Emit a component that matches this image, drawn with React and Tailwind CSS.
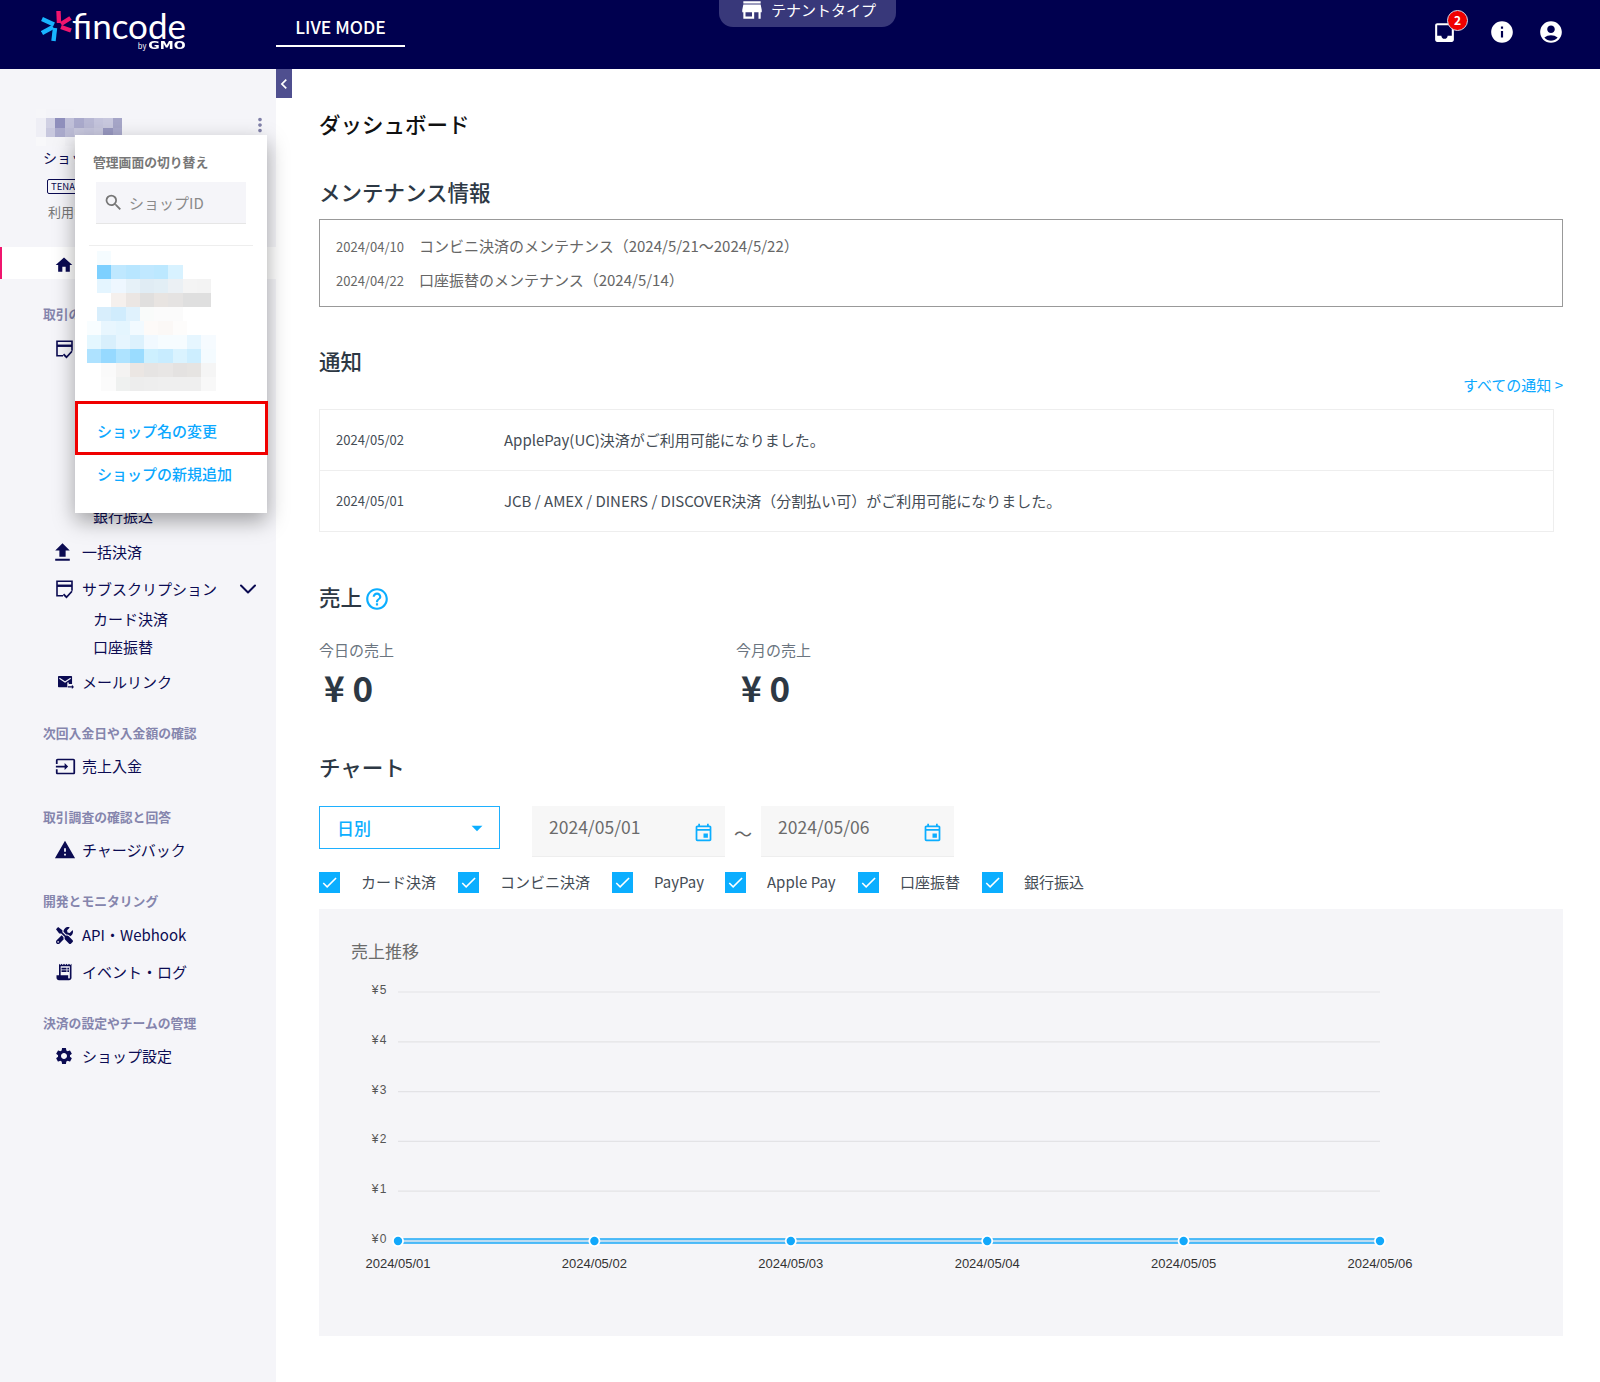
import {
  MdInbox, MdInfo, MdAccountCircle, MdStore, MdHome, MdSearch, MdFileUpload,
  MdInput, MdWarning, MdReceiptLong, MdSettings, MdChevronLeft,
  MdMoreVert, MdHelpOutline, MdOutlineEvent, MdArrowDropDown, MdCheck,
} from 'react-icons/md'
import { FaTools } from 'react-icons/fa'
import { ChevronDown } from 'lucide-react'

// mosaic blur over the shop names, row by row
const nameMosaic = [
  ['#f6f6f9', '#f4f4f8', '#f4f4f8', '#f4f4f8', '#f5f5f9', '#f5f5f9', '#f5f5f9', '#f5f5f9', '#f5f5f9'],
  ['#eeeef5', '#d0d0e3', '#8f8fbc', '#c0c0d9', '#aaaacc', '#b8b8d4', '#c4c4dc', '#c8c8de', '#a6a6c8'],
  ['#eeeef5', '#c8c8de', '#aaaacc', '#bcbcd6', '#c6c6dc', '#c4c4dc', '#c8c8de', '#9898c0', '#aaaacc'],
  ['#f8f8fa', '#f5f5f8', '#f5f5f8', '#f2f2f6', '#f6f6f8', '#f8f8fa', '#f8f8fa', '#f8f8fa', '#f8f8fa'],
]
const W = '#ffffff'
const shopMosaicTop = [
  ['#f5fcff', W, W, W, W, W, W, W],
  ['#7dd0ff', '#bfe8ff', '#b8e6ff', '#c0e8ff', '#bce8ff', '#d8f2ff', W, W],
  ['#e4f5ff', '#eef7ff', '#e6f1f8', '#e0ecf4', '#e2eef5', '#ebf0f4', '#f4f4f4', '#f3f3f3'],
  [W, '#f5f0ed', '#ebe6e3', '#e0dfde', '#e8e4e1', '#e5e3e2', '#dfdfdf', '#dfdfdf'],
  ['#d8eefc', '#d0ecfd', '#e0f2fd', '#f9fbfa', '#fbfbfb', '#fbfbfb', W, W],
]
const shopMosaicBottom = [
  ['#f8fdff', '#e8f6fe', '#e4f5fe', '#f2faff', '#fdfaf8', '#fbf8f6', '#fdfcfb', W, W],
  ['#e4f7ff', '#d8effc', '#e6f5fe', '#dcf1fd', '#f1f9ff', '#f6fcff', '#f6fcff', '#e6f6ff', '#f6fbff'],
  ['#aee2ff', '#96d9ff', '#aee3ff', '#9adcff', '#cdf0ff', '#c8ecff', '#daf3ff', '#cdeeff', '#f4fbff'],
  [W, '#fafafa', '#f4f3f2', '#ebe6e3', '#e6e4e3', '#e8e6e5', '#e4e2e1', '#e6e4e2', '#f5f5f5'],
  [W, '#fbfbfb', '#eff1f0', '#ededed', '#eeeeee', '#efefef', '#efefef', '#efefef', '#f8f8f8'],
]

function Mosaic({ rows, width, height }) {
  return (
    <div className="flex flex-col">
      {rows.map((row, i) => (
        <div key={i} className="flex">
          {row.map((c, j) => (
            <div key={j} style={{ width, height, backgroundColor: c }} />
          ))}
        </div>
      ))}
    </div>
  )
}

function CardCheckIcon({ className }) {
  return (
    <svg viewBox="1 1 17 18.5" className={className} fill="none" stroke="currentColor">
      <path d="M8 16.5H2V2h15v9.5" strokeWidth="1.6" />
      <path d="M2 6.5h15" strokeWidth="2.4" />
      <path d="M8.5 15l3 3 5.5-6" strokeWidth="1.8" />
    </svg>
  )
}

function MailLinkIcon({ className }) {
  return (
    <svg viewBox="0 0 18 16" className={className} fill="currentColor">
      <path d="M1.8 1h13.4c.4 0 .8.3.8.8v7.7h-3.5V8h-1.6v5H1.8c-.5 0-.8-.4-.8-.8V1.8c0-.5.3-.8.8-.8z" />
      <path d="M2.5 3.5L8.5 7.5l6-4" fill="none" stroke="#f5f5f9" strokeWidth="1.2" />
      <path d="M11.5 12h4.3v-1.6l2.2 2.3-2.2 2.3V13.4h-4.3z" />
    </svg>
  )
}

function Logo() {
  return (
    <div className="flex items-start w-[170px]">
      <svg viewBox="0 0 32 32" className="w-[32px] h-[32px] mt-[10px] shrink-0" strokeWidth="4.4" strokeLinecap="butt">
        <path d="M17.5 1 L18 13" stroke="#f0156e" />
        <path d="M29.5 8 L20 14" stroke="#f0156e" />
        <path d="M30 20.5 L20 17" stroke="#f0156e" />
        <path d="M12.5 31 L14 18" stroke="#18b4ff" />
        <path d="M1 23 L12 17" stroke="#18b4ff" />
        <path d="M1 9 L13 14.5" stroke="#18b4ff" />
      </svg>
      <div className="flex flex-col items-end ml-[1px] w-[112px] shrink-0">
        <span className="text-[35px] leading-[34px] mt-[8px] text-white font-['Lato',sans-serif]">fincode</span>
        <span className="flex items-baseline gap-[13px] text-[7.5px] leading-[8px] text-white">
          by
          <span className="inline-block origin-right scale-x-[1.4] text-[10px] font-bold font-['DejaVu_Sans',sans-serif]">GMO</span>
        </span>
      </div>
    </div>
  )
}

function Header() {
  return (
    <header className="relative h-[69px] bg-[#00004f] flex items-start text-white">
      <div className="w-[276px] pl-[41px]">
        <Logo />
      </div>
      <div className="w-[129px] h-[47px] border-b-[2.5px] border-white flex items-end justify-center pb-[5px]">
        <span className="text-[17.5px] leading-[26px] font-medium">LIVE MODE</span>
      </div>
      <div className="absolute left-[719px] top-0 w-[177px] h-[27px] rounded-b-[14px] bg-[#38387a] flex items-center justify-center gap-[6px] pb-[7px]">
        <MdStore className="text-[26px]" />
        <span className="text-[15px] leading-[20px]">テナントタイプ</span>
      </div>
      <div className="ml-auto flex items-center mt-[19px] pr-[36px]">
        <div className="relative mr-[32px]">
          <MdInbox className="text-[25px]" />
          <span className="absolute -top-[10px] -right-[11px] w-[21px] h-[21px] rounded-full bg-[#f00000] border border-[#d8d8e8] flex items-center justify-center text-[12px] font-bold leading-none">2</span>
        </div>
        <MdInfo className="text-[26px] mr-[23px]" />
        <MdAccountCircle className="text-[26px]" />
      </div>
    </header>
  )
}

function SectionLabel({ children, className }) {
  return <p className={`pl-[43px] text-[12.8px] leading-[18px] font-bold text-[#8585ad] ${className}`}>{children}</p>
}

function NavItem({ icon, label, className, right }) {
  return (
    <div className={`flex items-center pl-[54px] h-[24px] text-[#0b0b52] ${className}`}>
      <span className="w-[28px] shrink-0 flex">{icon}</span>
      <span className="text-[15px] leading-[24px]">{label}</span>
      {right}
    </div>
  )
}

function Sidebar() {
  return (
    <aside className="relative w-[276px] shrink-0 bg-[#f5f5f9]">
      <div className="pt-[40px] flex justify-between pl-[36px] pr-[5px] h-[79px]">
        <div className="blur-[0.6px] h-fit">
          <Mosaic rows={nameMosaic} width={9.6} height={9.3} />
        </div>
        <MdMoreVert className="text-[22px] text-[#8080a8] mt-[5px]" />
      </div>
      <p className="pl-[43px] mt-[-1px] text-[14px] leading-[20px] text-[#0b0b52]">ショップ</p>
      <div className="pl-[47px] mt-[12px] flex">
        <span className="border border-[#0b0b52] rounded-[2px] px-[3px] h-[15px] text-[9.5px] leading-[13px] text-[#0b0b52]">TENANT</span>
      </div>
      <p className="pl-[48px] mt-[8px] text-[13px] leading-[20px] text-[#777777]">利用中</p>

      <div className="mt-[25px] h-[32px] bg-white border-l-[2px] border-[#f0156e] flex items-center pl-[52px] pt-[3px] text-[#0b0b52]">
        <MdHome className="text-[20px]" />
      </div>

      <SectionLabel className="mt-[26px]">取引の確認</SectionLabel>
      <NavItem icon={<CardCheckIcon className="w-[17px] h-[19px] ml-[2px]" />} className="mt-[14px]" />
      <p className="pl-[93px] mt-[143px] text-[15px] leading-[24px] text-[#0b0b52]">銀行振込</p>
      <NavItem icon={<MdFileUpload className="text-[25px] -ml-[4px]" />} label="一括決済" className="mt-[12px]" />
      <NavItem
        icon={<CardCheckIcon className="w-[17px] h-[19px] ml-[2px]" />}
        label="サブスクリプション"
        className="mt-[13px]"
        right={<ChevronDown size={28} strokeWidth={1.7} className="ml-[17px] shrink-0" />}
      />
      <p className="pl-[93px] mt-[6px] text-[15px] leading-[24px] text-[#0b0b52]">カード決済</p>
      <p className="pl-[93px] mt-[4px] text-[15px] leading-[24px] text-[#0b0b52]">口座振替</p>
      <NavItem icon={<MailLinkIcon className="w-[17px] h-[15px] ml-[3px]" />} label="メールリンク" className="mt-[11px]" />

      <SectionLabel className="mt-[30px]">次回入金日や入金額の確認</SectionLabel>
      <NavItem icon={<MdInput className="text-[21px] ml-[1px]" />} label="売上入金" className="mt-[12px]" />
      <SectionLabel className="mt-[30px]">取引調査の確認と回答</SectionLabel>
      <NavItem icon={<MdWarning className="text-[22px]" />} label="チャージバック" className="mt-[12px]" />
      <SectionLabel className="mt-[30px]">開発とモニタリング</SectionLabel>
      <NavItem icon={<FaTools className="text-[17px] ml-[2px]" />} label="API・Webhook" className="mt-[13px]" />
      <NavItem icon={<MdReceiptLong className="text-[20px]" />} label="イベント・ログ" className="mt-[13px]" />
      <SectionLabel className="mt-[30px]">決済の設定やチームの管理</SectionLabel>
      <NavItem icon={<MdSettings className="text-[20px]" />} label="ショップ設定" className="mt-[12px]" />

      {/* ショップ切り替えメニュー */}
      <div className="absolute left-[75px] top-[66px] w-[192px] h-[378px] bg-white shadow-[0_8px_20px_rgba(0,0,0,0.35)] flex flex-col">
        <p className="pl-[18px] mt-[18px] text-[12.8px] leading-[18px] font-bold text-[#777777]">管理画面の切り替え</p>
        <div className="ml-[21px] mr-[21px] mt-[11px] h-[42px] bg-[#f5f5f9] border-b border-[#e6e6e6] flex items-center pl-[7px] text-[#777777]">
          <MdSearch className="text-[21px]" />
          <span className="ml-[5px] text-[15px] leading-[22px] text-[#8a8a8a]">ショップID</span>
        </div>
        <div className="mx-[14px] mt-[21px] border-t border-[#eeeeee]" />
        <div className="ml-[12px] mt-[5px] h-[140px] blur-[0.6px]">
          <div className="ml-[10px]">
            <Mosaic rows={shopMosaicTop} width={14.3} height={14} />
          </div>
          <Mosaic rows={shopMosaicBottom} width={14.3} height={14} />
        </div>
        <div className="mt-[10px] -mr-[1px] h-[54px] border-[3px] border-[#f00000] flex items-center pl-[19px] pt-[6px] text-[15px] font-medium text-[#0ba8ff]">ショップ名の変更</div>
        <div className="pl-[22px] mt-[7px] text-[15px] leading-[24px] font-medium text-[#0ba8ff]">ショップの新規追加</div>
      </div>
    </aside>
  )
}

function Heading({ children, className }) {
  return <h2 className={`text-[21.5px] leading-[30px] font-medium text-[#2d3844] ${className}`}>{children}</h2>
}

function Checkbox({ label, className }) {
  return (
    <div className={`flex items-center ${className}`}>
      <span className="w-[21px] h-[21px] bg-[#0baeff] flex items-center justify-center text-white">
        <MdCheck className="text-[19px]" />
      </span>
      <span className="ml-[21px] -mt-[2px] text-[15px] leading-[22px] text-[#444c55]">{label}</span>
    </div>
  )
}

function DateField({ value }) {
  return (
    <div className="w-[193px] h-[51px] bg-[#f7f7f7] border-b border-[#eeeeee] flex pl-[17px] pr-[11px]">
      <span className="text-[17.5px] leading-[42px] text-[#6b6b6b]">{value}</span>
      <MdOutlineEvent className="ml-auto mt-[16px] text-[21px] text-[#0baeff]" />
    </div>
  )
}

function Chart() {
  const xs = [398, 594.4, 790.8, 987.2, 1183.6, 1380]
  const ys = [1241, 1191.2, 1141.4, 1091.6, 1041.8, 992]
  const dates = ['2024/05/01', '2024/05/02', '2024/05/03', '2024/05/04', '2024/05/05', '2024/05/06']
  return (
    <svg viewBox="319 970 1244 310" className="w-[1244px] h-[310px] font-['Liberation_Sans',sans-serif]">
      {ys.map((y, i) => (
        <g key={y}>
          <line x1="398" x2="1380" y1={y} y2={y} stroke="#e3e3e6" strokeWidth="1.2" />
          <text x="388" y={y + 2} textAnchor="end" fontSize="12" fill="#555555" letterSpacing="1.5">¥{i}</text>
        </g>
      ))}
      <rect x="398" y="1238.5" width="982" height="5" fill="#bcdcf2" />
      <line x1="398" x2="1380" y1="1239" y2="1239" stroke="#25aef8" strokeWidth="1.5" />
      <line x1="398" x2="1380" y1="1243" y2="1243" stroke="#25aef8" strokeWidth="1.5" />
      {xs.map((x, i) => (
        <g key={x}>
          <circle cx={x} cy="1241" r="6" fill="#ffffff" />
          <circle cx={x} cy="1241" r="4.2" fill="#12a8fb" />
          <text x={x} y="1268" textAnchor="middle" fontSize="13" fill="#333333">{dates[i]}</text>
        </g>
      ))}
    </svg>
  )
}

function Main() {
  return (
    <main className="flex-1 min-w-0 pl-[43px] pr-[37px] relative">
      <button className="absolute left-0 top-0 w-[16px] h-[29px] bg-[#4f4f8f] flex items-center justify-center text-white">
        <MdChevronLeft className="text-[20px] shrink-0" />
      </button>

      <h1 className="mt-[40px] text-[21.5px] leading-[30px] font-medium text-[#111111]">ダッシュボード</h1>

      <Heading className="mt-[38px]">メンテナンス情報</Heading>
      <div className="mt-[12px] h-[88px] border border-[#999999] pl-[16px] pt-[1px] flex flex-col justify-center gap-[9px]">
        <div className="flex items-center h-[25px] text-[#666666]">
          <span className="w-[83px] text-[13px]">2024/04/10</span>
          <span className="text-[15px]">コンビニ決済のメンテナンス（2024/5/21〜2024/5/22）</span>
        </div>
        <div className="flex items-center h-[25px] text-[#666666]">
          <span className="w-[83px] text-[13px]">2024/04/22</span>
          <span className="text-[15px]">口座振替のメンテナンス（2024/5/14）</span>
        </div>
      </div>

      <Heading className="mt-[39px]">通知</Heading>
      <div className="flex justify-end mt-[-2px]">
        <span className="text-[15px] leading-[22px] text-[#0ba8ff]">すべての通知 &gt;</span>
      </div>
      <div className="mt-[13px] mr-[9px] border border-[#eeeeee] text-[15px] text-[#444c55]">
        <div className="flex items-center h-[61px] border-b border-[#eeeeee] pl-[16px]">
          <span className="w-[168px] text-[13px]">2024/05/02</span>
          <span>ApplePay(UC)決済がご利用可能になりました。</span>
        </div>
        <div className="flex items-center h-[60px] pl-[16px]">
          <span className="w-[168px] text-[13px]">2024/05/01</span>
          <span>JCB / AMEX / DINERS / DISCOVER決済（分割払い可）がご利用可能になりました。</span>
        </div>
      </div>

      <div className="mt-[50px] flex items-center gap-[2px]">
        <Heading>売上</Heading>
        <MdHelpOutline className="text-[26px] text-[#0baeff] mt-[3px]" />
      </div>
      <div className="mt-[27px] flex">
        <div className="w-[417px]">
          <p className="text-[15px] leading-[22px] text-[#6b7580]">今日の売上</p>
          <p className="mt-[4px] ml-[5px] text-[35px] leading-[44px] font-bold text-[#2d3844]">¥ 0</p>
        </div>
        <div>
          <p className="text-[15px] leading-[22px] text-[#6b7580]">今月の売上</p>
          <p className="mt-[4px] ml-[5px] text-[35px] leading-[44px] font-bold text-[#2d3844]">¥ 0</p>
        </div>
      </div>

      <Heading className="mt-[43px]">チャート</Heading>
      <div className="mt-[24px] flex items-start">
        <div className="w-[181px] h-[43px] border border-[#1eb0ff] flex items-center pl-[17px] pr-[9px] text-[#0baeff]">
          <span className="text-[17px] font-medium">日別</span>
          <MdArrowDropDown className="ml-auto text-[26px]" />
        </div>
        <div className="ml-[32px]"><DateField value="2024/05/01" /></div>
        <span className="w-[36px] text-center text-[18px] leading-[54px] text-[#666666]">～</span>
        <DateField value="2024/05/06" />
      </div>
      <div className="mt-[12px] flex items-center h-[21px]">
        <Checkbox label="カード決済" className="w-[139px]" />
        <Checkbox label="コンビニ決済" className="w-[154px]" />
        <Checkbox label="PayPay" className="w-[113px]" />
        <Checkbox label="Apple Pay" className="w-[133px]" />
        <Checkbox label="口座振替" className="w-[124px]" />
        <Checkbox label="銀行振込" />
      </div>

      <div className="mt-[16px] h-[427px] bg-[#f5f5f8]">
        <p className="pl-[32px] pt-[30px] text-[17px] leading-[24px] text-[#6b6b6b]">売上推移</p>
        <div className="mt-[7px]">
          <Chart />
        </div>
      </div>
    </main>
  )
}

export default function App() {
  return (
    <div className="h-[1382px] flex flex-col bg-white overflow-hidden font-['Noto_Sans_CJK_JP','Noto_Sans',sans-serif]">
      <Header />
      <div className="flex flex-1">
        <Sidebar />
        <Main />
      </div>
    </div>
  )
}
